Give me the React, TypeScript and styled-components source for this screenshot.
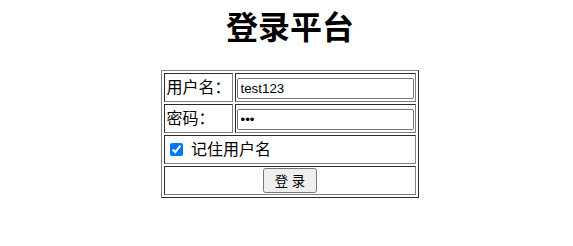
import React from "react";
import styled, { createGlobalStyle } from "styled-components";

const GlobalStyle = createGlobalStyle`
  body {
    margin: 0;
    font-family: "Liberation Sans", "Noto Sans CJK SC", sans-serif;
    font-size: 16px;
    line-height: 21px;
    color: #000;
    background: #fff;
  }
`;

const Page = styled.div`
  display: flex;
  flex-direction: column;
  align-items: center;
  padding-left: 7px;
`;

const Title = styled.h1`
  font-size: 32px;
  line-height: 37px;
  font-weight: bold;
  margin: 10px 0 23px;
`;

const LoginTable = styled.table`
  border: 1px outset gray;
  border-spacing: 2px;
`;

const Cell = styled.td<{ $center?: boolean }>`
  border: 1px inset gray;
  padding: 1px;
  height: 25px;
  vertical-align: middle;
  white-space: nowrap;
  text-align: ${(p) => (p.$center ? "center" : "left")};
`;

const TextInput = styled.input`
  font-family: "Liberation Sans", "Noto Sans CJK SC", sans-serif;
  font-size: 13.33px;
  width: 169px;
  padding: 1px 2px;
  vertical-align: middle;
`;

const Check = styled.input`
  vertical-align: middle;
  margin: 3px 3px 4px 4px;
`;

const Submit = styled.button`
  font-family: "Liberation Sans", "Noto Sans CJK SC", sans-serif;
  font-size: 13.33px;
  height: 25px;
  padding: 1px 10px;
  vertical-align: middle;
`;

export default function App() {
  return (
    <Page>
      <GlobalStyle />
      <Title>登录平台</Title>
      <LoginTable>
        <tbody>
          <tr>
            <Cell>用户名：</Cell>
            <Cell>
              <TextInput type="text" defaultValue="test123" />
            </Cell>
          </tr>
          <tr>
            <Cell>密码：</Cell>
            <Cell>
              <TextInput type="password" defaultValue="123" />
            </Cell>
          </tr>
          <tr>
            <Cell colSpan={2}>
              <label>
                <Check type="checkbox" defaultChecked /> 记住用户名
              </label>
            </Cell>
          </tr>
          <tr>
            <Cell colSpan={2} $center>
              <Submit type="submit">登 录</Submit>
            </Cell>
          </tr>
        </tbody>
      </LoginTable>
    </Page>
  );
}
